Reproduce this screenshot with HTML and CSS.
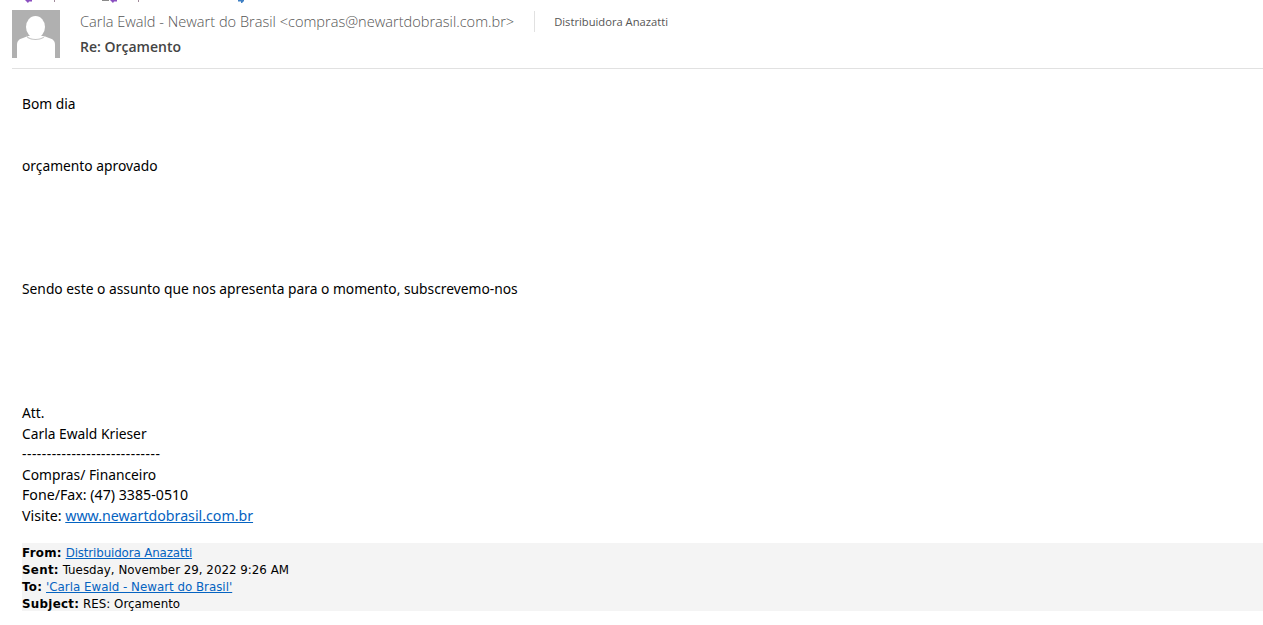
FILE: index.html
```html
<!DOCTYPE html>
<html lang="pt">
<head>
<meta charset="utf-8">
<title>Re: Orçamento</title>
<link rel="stylesheet" href="styles.css">
</head>
<body>
<div class="ribbon-strip">
  <svg class="clip-icons" width="250" height="4" viewBox="0 0 250 4"><path d="M25 0h7v1.500h-3l-1 1.500zM110 0h7v1.500h-3l-1 1.500z" fill="#8a4fc0"/><path d="M102 0h7v1h-7z" fill="#8a8a8a"/><path d="M54 0h1v2h-1zM138 0h1v2h-1z" fill="#a08a9a"/><path d="M238 0h6v1l-2 2h-1v-1.500h-3z" fill="#3f80c4"/></svg>
</div>
<header class="head">
  <svg class="avatar" width="48" height="48" viewBox="0 0 48 48"><rect width="48" height="48" fill="#b0b0b0"/><path d="M5 48V35c0-4 2-6 6-7l5-2h16l5 2c4 1 6 3 6 7v13z" fill="#fff"/><path d="M14 25c3 3 6 4 9.500 4s7-1 10-4l-2 3c-2 1-5 2-8 2s-6-1-8-2z" fill="#c4c4c4"/><ellipse cx="23.500" cy="17" rx="9.500" ry="11" fill="#fff"/></svg>
  <div class="meta">
    <div class="from-row">
      <span class="sender">Carla Ewald - Newart do Brasil &lt;compras@newartdobrasil.com.br&gt;</span>
      <span class="recipient">Distribuidora Anazatti</span>
    </div>
    <div class="subject">Re: Orçamento</div>
  </div>
</header>
<main class="body">
  <p class="p1">Bom dia</p>
  <p class="p2">orçamento aprovado</p>
  <p class="p3">Sendo este o assunto que nos apresenta para o momento, subscrevemo-nos</p>
  <div class="sig">
    <div>Att.</div>
    <div>Carla Ewald Krieser</div>
    <div class="dashes">----------------------------</div>
    <div>Compras/ Financeiro</div>
    <div class="wide">Fone/Fax: (47) 3385-0510</div>
    <div class="wide">Visite: <a href="#">www.newartdobrasil.com.br</a></div>
  </div>
  <div class="quoted">
    <div><b>From:</b> <a class="from-link" href="#">Distribuidora Anazatti</a></div>
    <div><b>Sent:</b> Tuesday, November 29, 2022 9:26 AM</div>
    <div><b>To:</b> <a href="#">'Carla Ewald - Newart do Brasil'</a></div>
    <div><b>Subject:</b> RES: Orçamento</div>
  </div>
</main>
</body>
</html>
```
FILE: styles.css
```css
html, body { margin: 0; padding: 0; background: #fff; overflow: hidden; }
body { height: 625px; font-family: "Open Sans", "Noto Sans", sans-serif; color: #000; }
.ribbon-strip { height: 10px; }
.clip-icons { display: block; }
.head { display: flex; gap: 20px; margin-left: 12px; height: 58px; border-bottom: 1px solid #e1e1e1; }
.avatar { display: block; flex: none; }
.meta { display: flex; flex-direction: column; }
.from-row { display: flex; align-items: center; height: 22px; }
.sender { font-size: 14.58px; color: #555; font-weight: 300; padding-right: 20px; border-right: 1px solid #e1e1e1; line-height: 21px; white-space: nowrap; }
.recipient { font-size: 11.2px; color: #555; margin-left: 19px; }
.subject { font-size: 14px; font-weight: 600; color: #444; margin-top: 5px; line-height: 20px; }
.body { padding-left: 22px; font-family: "Noto Sans", sans-serif; font-size: 13.8px; line-height: 20.6px; }
.body p { margin: 0; }
.p1 { padding-top: 25px; }
.p2 { padding-top: 41px; }
.p3 { padding-top: 103px; }
.sig { padding-top: 103.3px; }
.dashes { letter-spacing: 0.5px; }
.wide { font-size: 14.2px; }
a { color: #0563c1; text-decoration: underline; }
.from-link { letter-spacing: -0.13px; }
.quoted { box-sizing: border-box; height: 68px; margin-top: 16.4px; padding-top: 2px; background: #f4f4f4; font-family: "DejaVu Sans", sans-serif; font-size: 11.85px; line-height: 17px; }
.quoted b { letter-spacing: 0.3px; }
```
